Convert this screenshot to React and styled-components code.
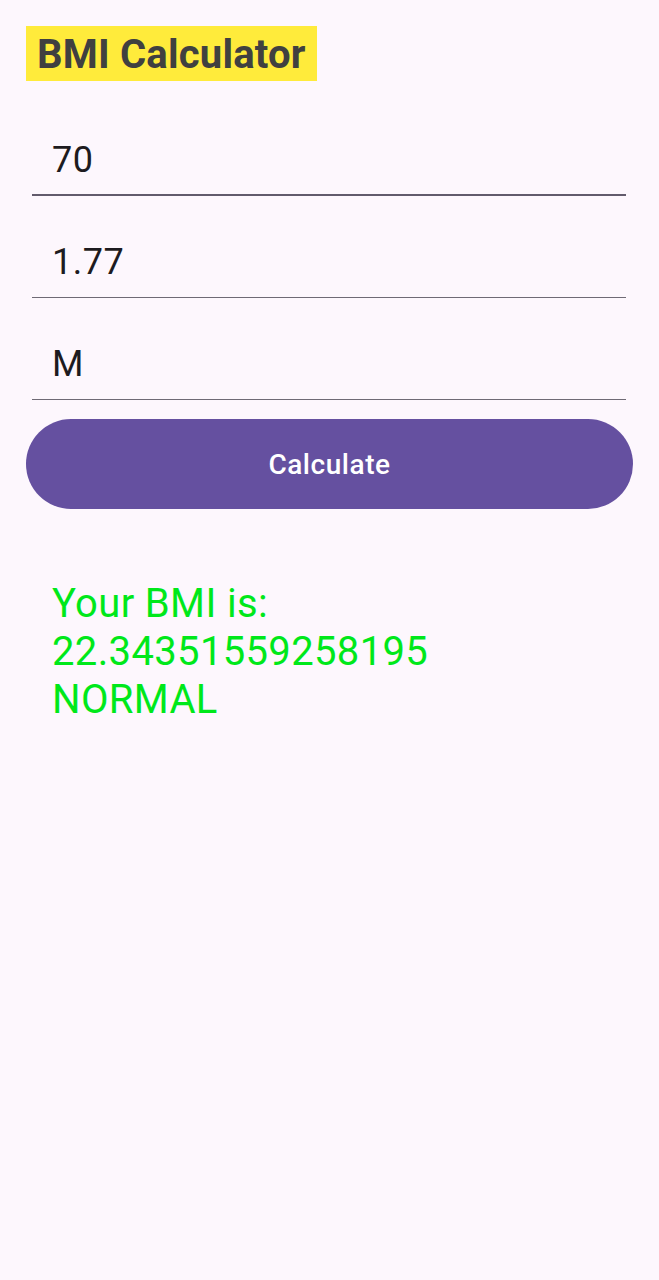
import React from "react";
import styled, { createGlobalStyle } from "styled-components";

const Global = createGlobalStyle`
  html, body {
    margin: 0;
    padding: 0;
    background: #fdf7fd;
  }
  body {
    font-family: Roboto, "Liberation Sans", sans-serif;
  }
`;

const Screen = styled.div`
  min-height: 1280px;
  background: #fdf7fd;
  padding-top: 26px;
  box-sizing: border-box;
  display: flex;
  flex-direction: column;
`;

const Title = styled.h1`
  align-self: flex-start;
  margin: 0 0 0 26px;
  height: 55px;
  padding: 2px 11px 0;
  box-sizing: border-box;
  background: #ffeb3b;
  color: #404040;
  font-size: 40px;
  font-weight: 700;
  line-height: 53px;
  letter-spacing: 0.2px;
`;

const Form = styled.div`
  display: flex;
  flex-direction: column;
  margin: 13px 33px 0 32px;
`;

const Field = styled.div`
  padding: 45px 0 ${(p) => (p.$focused ? 13 : 14)}px 20px;
  border-bottom: ${(p) => (p.$focused ? "2px solid #625b6c" : "1px solid #6f6a75")};
  font-size: 36px;
  line-height: 42px;
  letter-spacing: 0.5px;
  color: #1d1b20;
`;

const Button = styled.button`
  margin: 19px 26px 0 26px;
  height: 90px;
  border: none;
  border-radius: 45px;
  background: #6550a0;
  color: #ffffff;
  font-family: Roboto, "Liberation Sans", sans-serif;
  font-size: 28px;
  font-weight: 500;
  letter-spacing: 0.55px;
  padding-top: 2px;
  cursor: pointer;
`;

const Result = styled.div`
  margin: 71px 0 0 52px;
  color: #00e81a;
  font-size: 40px;
  line-height: 48px;
  letter-spacing: 0.35px;
`;

export default function App() {
  return (
    <>
      <Global />
      <Screen>
        <Title>BMI Calculator</Title>
        <Form>
          <Field $focused>70</Field>
          <Field>1.77</Field>
          <Field>M</Field>
        </Form>
        <Button>Calculate</Button>
        <Result>
          <div>Your BMI is:</div>
          <div>22.34351559258195</div>
          <div>NORMAL</div>
        </Result>
      </Screen>
    </>
  );
}
